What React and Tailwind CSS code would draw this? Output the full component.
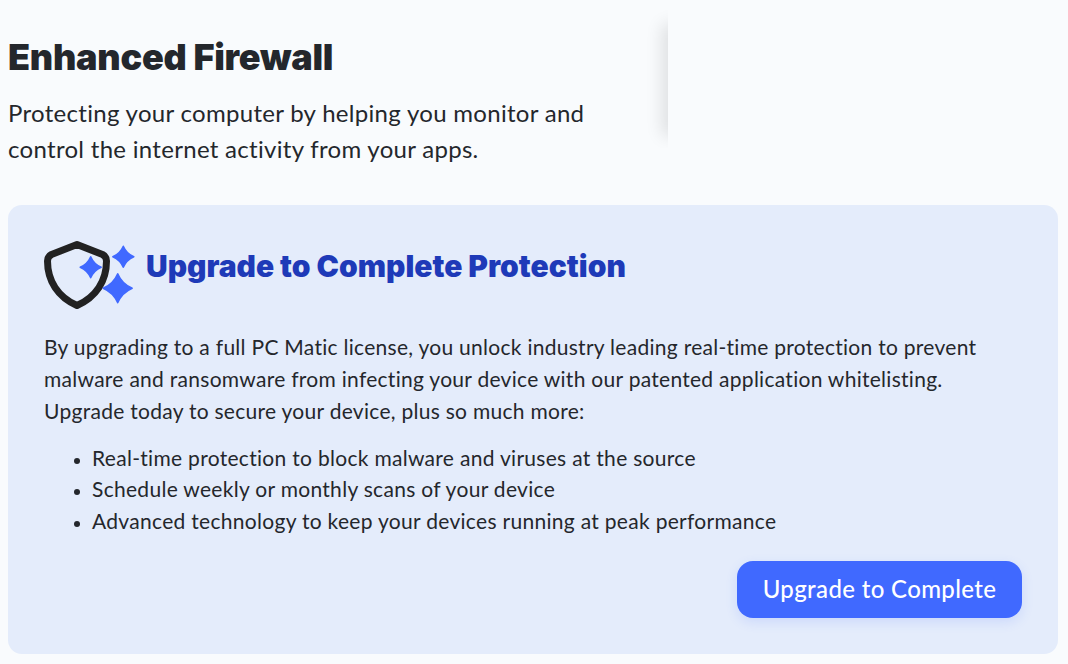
const sans = "font-['Lato','Liberation_Sans',sans-serif]";

function Star({ cx, cy, r }) {
  const k = r * 0.3;
  return (
    <path
      fill="#4069ff"
      stroke="#4069ff"
      strokeWidth="1.5"
      strokeLinejoin="round"
      d={`M${cx} ${cy - r}Q${cx + k} ${cy - k} ${cx + r} ${cy}Q${cx + k} ${cy + k} ${cx} ${cy + r}Q${cx - k} ${cy + k} ${cx - r} ${cy}Q${cx - k} ${cy - k} ${cx} ${cy - r}Z`}
    />
  );
}

function ShieldIcon() {
  return (
    <svg width="92" height="70" viewBox="0 0 92 70" className="shrink-0">
      <path
        d="M33 4.5L7.5 14.5Q3.5 16.5 3.5 21C3.5 41 14 57 33 65.5C52 57 62.5 41 62.5 21Q62.5 16.5 58.5 14.5Z"
        fill="none"
        stroke="#222222"
        strokeWidth="7"
        strokeLinejoin="round"
      />
      <Star cx={46.7} cy={27.3} r={10.5} />
      <Star cx={79.3} cy={16.7} r={10.5} />
      <Star cx={73.7} cy={48.3} r={14.5} />
    </svg>
  );
}

export default function App() {
  return (
    <div className={`min-h-[664px] w-[1068px] overflow-hidden bg-[#f9fbfd] text-[#24272c] ${sans}`}>
      <header className="flex h-[205px] pl-2">
        <div className="w-[632px] shrink-0 pt-[34px]">
          <h1 className="text-[36px] leading-[46px] font-black font-['Inter',sans-serif] tracking-[-0.25px] whitespace-nowrap">
            Enhanced Firewall
          </h1>
          <p className="mt-[15px] text-[24px] leading-[36px] tracking-[0.3px] w-[600px]">
            Protecting your computer by helping you monitor and control the internet activity from your apps.
          </p>
        </div>
        <div className="relative mt-2 h-[140px] w-7 shrink-0 overflow-hidden">
          <div className="absolute left-7 top-[22px] h-[100px] w-10 shadow-[0_0_16px_6px_rgba(0,0,0,0.11)]" />
        </div>
      </header>
      <section className="ml-2 flex h-[449px] w-[1050px] flex-col rounded-[14px] bg-[#e4ecfb] px-9 pt-[35px]">
        <div className="flex items-center gap-[10px]">
          <ShieldIcon />
          <h2 className="-mt-[18px] text-[30px] leading-[40px] font-black font-['Inter',sans-serif] text-[#1e3ab8] whitespace-nowrap">
            Upgrade to Complete Protection
          </h2>
        </div>
        <p className="mt-[21px] text-[21px] leading-[32px] tracking-[0.28px]">
          By upgrading to a full PC Matic license, you unlock industry leading real-time protection to prevent malware and ransomware from infecting your device with our patented application whitelisting. Upgrade today to secure your device, plus so much more:
        </p>
        <ul className="mt-[14.7px] list-disc pl-12 text-[21px] leading-[31.5px] tracking-[0.3px] marker:text-[17px]">
          <li>Real-time protection to block malware and viruses at the source</li>
          <li>Schedule weekly or monthly scans of your device</li>
          <li>Advanced technology to keep your devices running at peak performance</li>
        </ul>
        <div className="mt-[24.4px] flex justify-end">
          <button className="h-[57px] w-[285px] rounded-2xl bg-[#4069ff] text-[24px] font-medium tracking-[0.35px] text-white shadow-[0_4px_12px_rgba(64,105,255,0.15)]">
            Upgrade to Complete
          </button>
        </div>
      </section>
    </div>
  );
}
